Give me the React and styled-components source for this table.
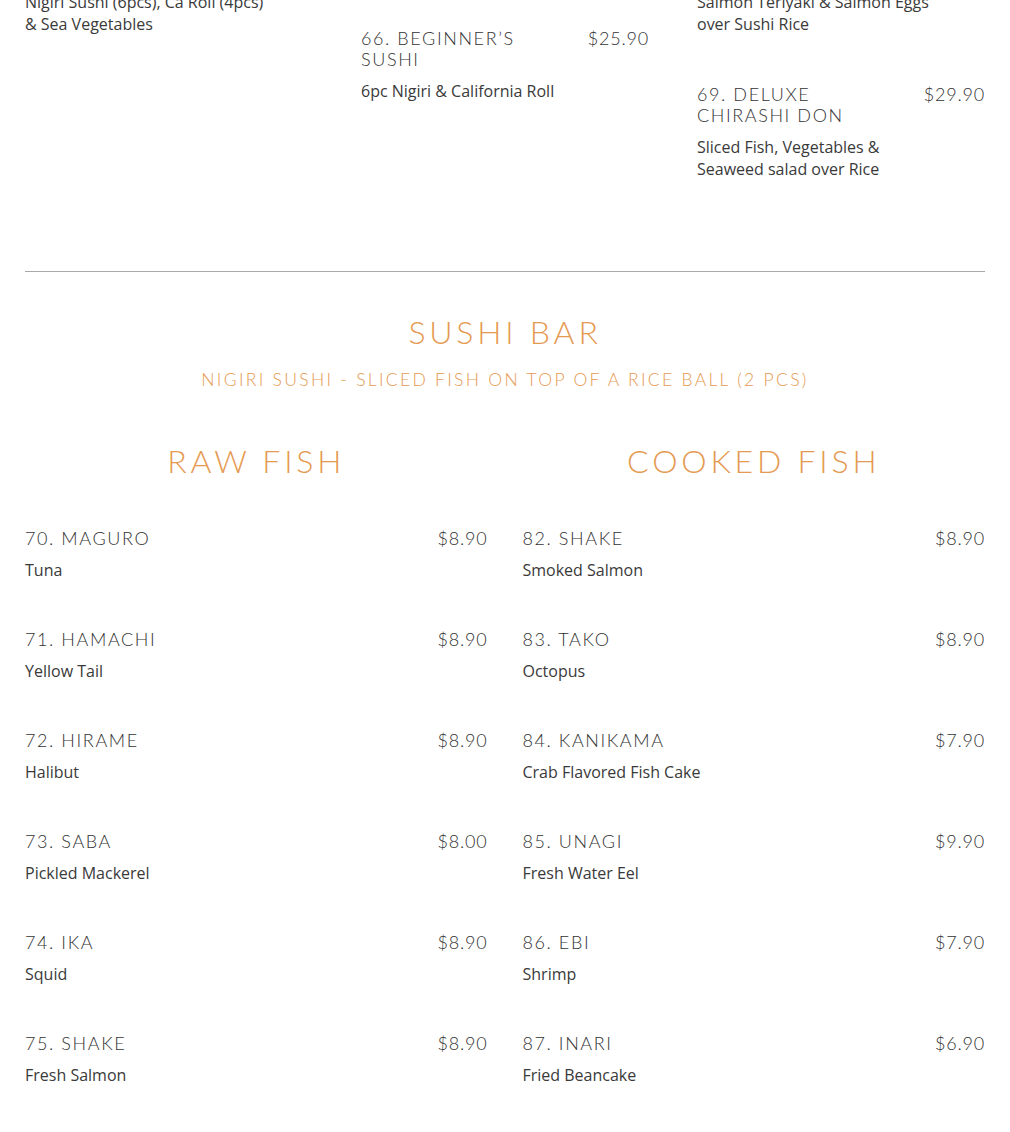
import React from 'react';
import styled, { createGlobalStyle } from 'styled-components';

const GlobalStyle = createGlobalStyle`
  html, body {
    margin: 0;
    padding: 0;
    background: #ffffff;
  }
  body {
    font-family: "Open Sans", "Liberation Sans", sans-serif;
    color: #333333;
  }
`;

const Page = styled.div`
  padding: 0 25px 40px;
  overflow: hidden;
`;

// the page is scrolled a little: the first rows sit above the window
const Scrolled = styled.div`
  margin-top: -142.5px;
`;

const ComboGrid = styled.div`
  display: grid;
  grid-template-columns: repeat(3, 1fr);
  column-gap: 48px;
  align-items: start;
`;

const Column = styled.div`
  display: flex;
  flex-direction: column;
  gap: ${(p) => p.$gap || 48.5}px;
`;

const Item = styled.div`
  display: flex;
  flex-direction: column;
`;

const ItemHead = styled.div`
  display: flex;
  justify-content: space-between;
  align-items: flex-start;
  gap: 16px;
  margin-bottom: 10.5px;
`;

const ItemName = styled.div`
  font-family: "Lato", "Liberation Sans", sans-serif;
  font-weight: 300;
  font-size: 18px;
  line-height: 21px;
  letter-spacing: 1.6px;
  text-transform: uppercase;
  color: #333333;
  max-width: ${(p) => p.$max || 'none'};
`;

const Price = styled.div`
  font-family: "Lato", "Liberation Sans", sans-serif;
  font-weight: 300;
  font-size: 18px;
  line-height: 21px;
  letter-spacing: 0.8px;
  color: #333333;
  white-space: nowrap;
`;

const Desc = styled.div`
  font-size: 16px;
  line-height: 22px;
  color: #3a3a3a;
  max-width: 245px;
`;

const Divider = styled.hr`
  border: none;
  border-top: 1px solid #a9a9a9;
  margin: 91px 0 0;
`;

const SectionHead = styled.div`
  display: flex;
  flex-direction: column;
  align-items: center;
  padding-top: 40px;
`;

const SectionTitle = styled.h2`
  margin: 0;
  font-family: "Lato", "Liberation Sans", sans-serif;
  font-weight: 300;
  font-size: 32px;
  line-height: 40px;
  letter-spacing: 3.8px;
  color: #e59a52;
`;

const SectionSub = styled.div`
  margin-top: 16px;
  font-family: "Lato", "Liberation Sans", sans-serif;
  font-weight: 300;
  font-size: 17.5px;
  line-height: 24px;
  letter-spacing: 2.3px;
  text-transform: uppercase;
  color: #e59a52;
`;

const FishGrid = styled.div`
  display: grid;
  grid-template-columns: 1fr 1fr;
  column-gap: 35px;
  margin-top: 49px;
`;

const GroupTitle = styled.h3`
  margin: 0 0 46.5px;
  text-align: center;
  font-family: "Lato", "Liberation Sans", sans-serif;
  font-weight: 300;
  font-size: 32px;
  line-height: 40px;
  letter-spacing: 3.8px;
  color: #e59a52;
`;

const combos = [
  {
    gap: 48.5,
    items: [
      { name: '63. Nigiri', price: '$19.90', desc: 'Chef’s Choice of Nigiri' },
      { name: '64. Sushi Set', price: '$22.90', desc: 'Nigiri Sushi (6pcs), Ca Roll (4pcs) & Sea Vegetables' },
    ],
  },
  {
    gap: 50.5,
    items: [
      {
        name: '65. Sashimi',
        price: '$32.90',
        desc: 'Assorted Sashimi (12pcs), Seaweed Salad, Miso Soup, Steamed Rice & Green Tea Ice Cream',
      },
      { name: '66. Beginner’s Sushi', price: '$25.90', desc: '6pc Nigiri & California Roll' },
    ],
  },
  {
    gap: 48.5,
    items: [
      { name: '67. Tekka Don', price: '$24.90', desc: 'Tuna over Sushi Rice' },
      { name: '68. Sake Don', price: '$26.90', desc: 'Salmon Teriyaki & Salmon Eggs over Sushi Rice' },
      { name: '69. Deluxe Chirashi Don', price: '$29.90', desc: 'Sliced Fish, Vegetables & Seaweed salad over Rice' },
    ],
  },
];

const raw = [
  ['70. Maguro', '$8.90', 'Tuna'],
  ['71. Hamachi', '$8.90', 'Yellow Tail'],
  ['72. Hirame', '$8.90', 'Halibut'],
  ['73. Saba', '$8.00', 'Pickled Mackerel'],
  ['74. Ika', '$8.90', 'Squid'],
  ['75. Shake', '$8.90', 'Fresh Salmon'],
];

const cooked = [
  ['82. Shake', '$8.90', 'Smoked Salmon'],
  ['83. Tako', '$8.90', 'Octopus'],
  ['84. Kanikama', '$7.90', 'Crab Flavored Fish Cake'],
  ['85. Unagi', '$9.90', 'Fresh Water Eel'],
  ['86. Ebi', '$7.90', 'Shrimp'],
  ['87. Inari', '$6.90', 'Fried Beancake'],
];

const FishList = ({ title, items }) => (
  <div>
    <GroupTitle>{title}</GroupTitle>
    <Column $gap={47.5}>
      {items.map(([name, price, desc]) => (
        <Item key={name}>
          <ItemHead>
            <ItemName>{name}</ItemName>
            <Price>{price}</Price>
          </ItemHead>
          <Desc>{desc}</Desc>
        </Item>
      ))}
    </Column>
  </div>
);

const App = () => (
  <Page>
    <GlobalStyle />
    <Scrolled>
      <ComboGrid>
        {combos.map((col, i) => (
          <Column key={i} $gap={col.gap}>
            {col.items.map((it) => (
              <Item key={it.name}>
                <ItemHead>
                  <ItemName $max="190px">{it.name}</ItemName>
                  <Price>{it.price}</Price>
                </ItemHead>
                <Desc>{it.desc}</Desc>
              </Item>
            ))}
          </Column>
        ))}
      </ComboGrid>
    </Scrolled>

    <Divider />

    <SectionHead>
      <SectionTitle>SUSHI BAR</SectionTitle>
      <SectionSub>Nigiri Sushi - Sliced Fish on top of a Rice Ball (2 pcs)</SectionSub>
    </SectionHead>

    <FishGrid>
      <FishList title="RAW FISH" items={raw} />
      <FishList title="COOKED FISH" items={cooked} />
    </FishGrid>
  </Page>
);

export default App;
